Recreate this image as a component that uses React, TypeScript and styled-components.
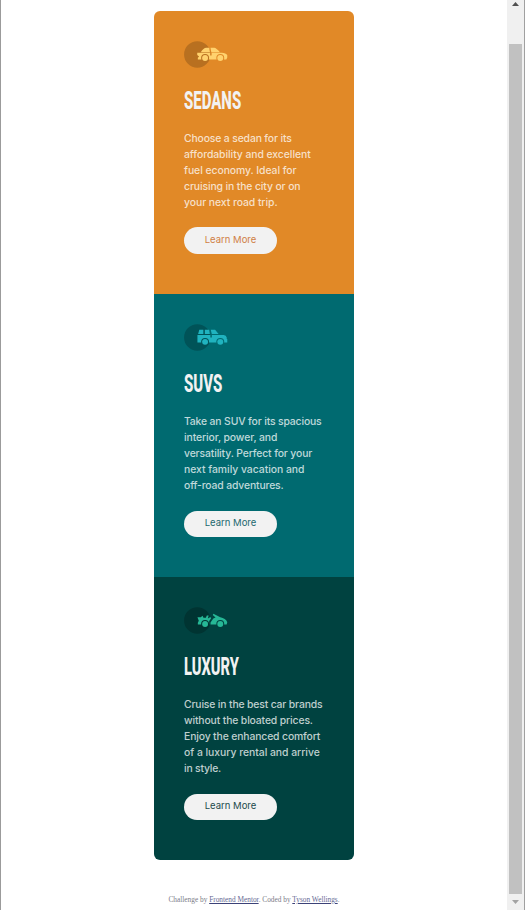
import React from "react";
import styled, { createGlobalStyle } from "styled-components";

const GlobalStyle = createGlobalStyle`
  * { box-sizing: border-box; }
  body { margin: 0; background: #fff; overflow: hidden; }
  h2, p { margin: 0; }
`;

const Frame = styled.div`
  display: flex;
  width: 525px;
  height: 910px;
  overflow: hidden;
  border-left: 1px solid #9b9b9b;
  background: #fff;
`;

const Page = styled.main`
  width: 506px;
  padding-top: 11px;
  display: flex;
  flex-direction: column;
  align-items: center;
`;

const Cards = styled.div`
  width: 200px;
  border-radius: 6px;
  overflow: hidden;
`;

const Card = styled.section<{ $bg: string }>`
  height: 283px;
  padding: 30px 0 0 30px;
  background: ${(p) => p.$bg};
`;

const Icon = styled.svg`
  display: block;
  width: 44px;
  height: 27px;
`;

const Title = styled.h2<{ $scale: number }>`
  width: max-content;
  height: 32px;
  margin-top: 16px;
  font: 800 26.5px/32px Roboto, sans-serif;
  color: #f2f2f2;
  transform: scaleX(${(p) => p.$scale});
  transform-origin: 0 50%;
  white-space: nowrap;
`;

const Copy = styled.p`
  margin-top: 15px;
  font: 550 10.4px/16px Inter, sans-serif;
  color: rgba(255, 255, 255, 0.75);
`;

const Line = styled.span<{ $spacing: number }>`
  display: block;
  letter-spacing: ${(p) => p.$spacing}px;
  white-space: nowrap;
`;

const Button = styled.button<{ $color: string; $low: boolean }>`
  display: flex;
  justify-content: center;
  width: 93px;
  height: ${(p) => (p.$low ? 26 : 27)}px;
  margin-top: ${(p) => (p.$low ? 17 : 16)}px;
  padding: 0;
  border: 0;
  border-radius: 14px;
  background: #f2f2f2;
  color: ${(p) => p.$color};
  font: 400 9.5px/${(p) => (p.$low ? 24 : 26)}px Inter, sans-serif;
`;

const Footer = styled.footer`
  margin-top: 35px;
  font: 7.33px/10px "Liberation Serif", serif;
  color: #7c7c88;
  white-space: nowrap;
`;

const Link = styled.a`
  color: #666a94;
  text-decoration: underline;
  text-decoration-color: #3c4278;
`;

const ScrollBar = styled.div`
  display: flex;
  flex-direction: column;
  justify-content: space-between;
  align-items: center;
  width: 18px;
  height: 910px;
  background: #f0f0f0;
  border-right: 1px solid #a0a0a0;
`;

const Arrow = styled.svg`
  display: block;
  width: 7px;
  height: 4px;
  margin: 2px 0 6px;
`;

const Thumb = styled.div`
  width: 13px;
  height: 850px;
  margin-top: 28px;
  background: #c1c1c1;
`;

type Kind = "sedan" | "suv" | "luxury";

function Car({ kind, color, bg, shade }: { kind: Kind; color: string; bg: string; shade: string }) {
  const wheelY = kind === "suv" ? 26.6 : 25.4;
  return (
    <Icon viewBox="0 0 65.5 40.2">
      <circle cx="19.8" cy="20" r="19.7" fill={shade} />
      {kind === "sedan" && (
        <g fill={color}>
          <path d="M25 16.8 Q29 10.4 33.2 10.2 H37.6 L38.7 16.8Z M39.4 10.2 H45 Q48 10.4 53.5 16.8 H40.7Z" />
          <path d="M19.7 17.6 H39 V21.5 H41.2 V17.6 H56 Q62.5 18 64.4 21 V24.6 L63 27.4 H20.6 V25 L22.5 23 L19.7 20.7Z" />
        </g>
      )}
      {kind === "suv" && (
        <g fill={color}>
          <path d="M22.8 8.4 H28.8 V14.8 H21Z M31 8.4 H37.4 L38.6 14.8 H31Z M39.8 8.4 H46.3 L51.5 14.8 H41.4Z" />
          <path d="M20 16.2 H39.3 V20 H41.5 V16.2 H59 Q63 16.6 63.6 20 V22.5 H64.4 V27.5 H20Z" />
        </g>
      )}
      {kind === "luxury" && (
        <g fill={color}>
          <path d="M20 15.4 H25 L27.5 13.2 L29 16 H32.5 L34 12.5 H36.7 L35.5 17 L39.3 15 L40.3 17 L37.5 21 V26.2 H20.6 V23.5 L22 20.5Z" />
          <path d="M43.8 10 L54 15.4 Q62 16.8 64.4 22.6 L63.5 26.2 H39.5 V23 L43.7 17 L47 15.6 L42.8 11.9Z" />
        </g>
      )}
      <circle cx="31.4" cy={wheelY} r="5.9" fill={shade} />
      <circle cx="54" cy={wheelY} r="5.9" fill={bg} />
      <circle cx="31.4" cy={wheelY} r="4.4" fill={color} />
      <circle cx="54" cy={wheelY} r="4.4" fill={color} />
    </Icon>
  );
}

const cars: {
  kind: Kind; title: string; scale: number; bg: string; color: string; shade: string; label: string;
  lines: [string, number][];
}[] = [
  {
    kind: "sedan", title: "SEDANS", scale: 0.565, bg: "#e18927", color: "#ffd26e", shade: "#b87020", label: "#d08045",
    lines: [["Choose a sedan for its", -0.15], ["affordability and excellent", -0.06], ["fuel economy. Ideal for", -0.05], ["cruising in the city or on", -0.12], ["your next road trip.", -0.06]],
  },
  {
    kind: "suv", title: "SUVS", scale: 0.565, bg: "#006a70", color: "#20b3bf", shade: "#005358", label: "#22686e",
    lines: [["Take an SUV for its spacious", -0.15], ["interior, power, and", -0.11], ["versatility. Perfect for your", -0.13], ["next family vacation and", -0.03], ["off-road adventures.", -0.15]],
  },
  {
    kind: "luxury", title: "LUXURY", scale: 0.555, bg: "#004240", color: "#26b796", shade: "#003432", label: "#1c4a4c",
    lines: [["Cruise in the best car brands", -0.16], ["without the bloated prices.", -0.14], ["Enjoy the enhanced comfort", -0.14], ["of a luxury rental and arrive", -0.03], ["in style.", -0.2]],
  },
];

export default function App() {
  return (
    <>
      <GlobalStyle />
      <Frame>
        <Page>
          <Cards>
            {cars.map((c) => (
              <Card key={c.kind} $bg={c.bg}>
                <Car kind={c.kind} color={c.color} bg={c.bg} shade={c.shade} />
                <Title $scale={c.scale}>{c.title}</Title>
                <Copy>
                  {c.lines.map(([text, spacing]) => (
                    <Line key={text} $spacing={spacing}>{text} </Line>
                  ))}
                </Copy>
                <Button $color={c.label} $low={c.kind !== "sedan"}>Learn More</Button>
              </Card>
            ))}
          </Cards>
          <Footer>
            Challenge by <Link>Frontend Mentor</Link>. Coded by <Link>Tyson Wellings</Link>.
          </Footer>
        </Page>
        <ScrollBar>
          <Arrow viewBox="0 0 7 4"><path d="M0 4 L3.5 0 L7 4Z" fill="#505050" /></Arrow>
          <Thumb />
          <Arrow viewBox="0 0 7 4"><path d="M0 0 L3.5 4 L7 0Z" fill="#a3a3a3" /></Arrow>
        </ScrollBar>
      </Frame>
    </>
  );
}
